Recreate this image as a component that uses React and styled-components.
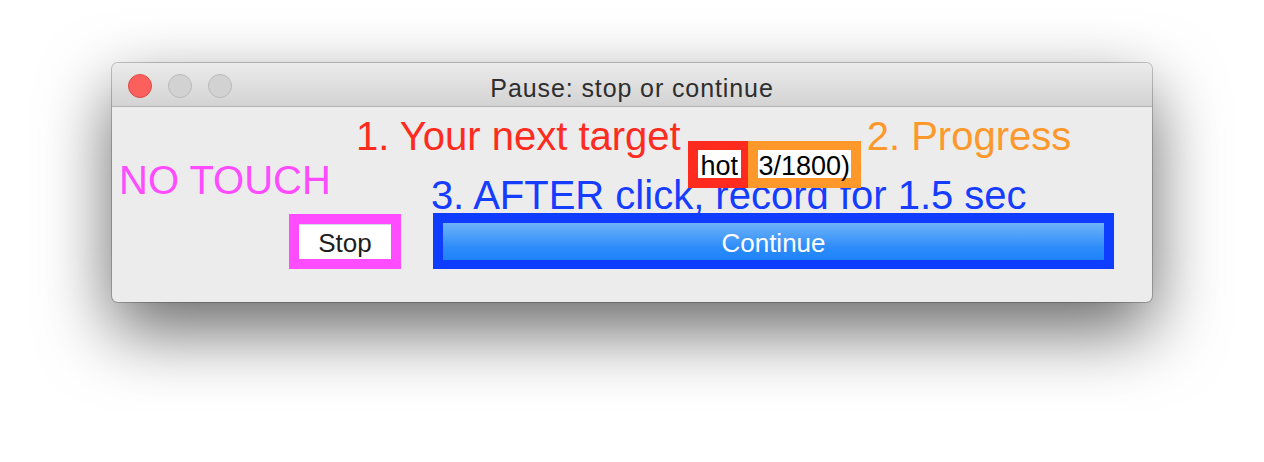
import React from "react";
import styled, { createGlobalStyle } from "styled-components";

const Global = createGlobalStyle`
  html, body { margin: 0; padding: 0; background: #ffffff; }
  body { font-family: "Liberation Sans", Arial, sans-serif; }
  #root { padding-top: 63px; padding-left: 112px; height: 462px; box-sizing: border-box; }
`;

const Window = styled.div`
  width: 1040px;
  height: 239px;
  box-sizing: border-box;
  border-radius: 6px;
  background: #ececec;
  box-shadow: 0 0 0 1px rgba(0, 0, 0, 0.22), 0 28px 70px rgba(0, 0, 0, 0.6);
  overflow: hidden;
  display: flex;
  flex-direction: column;
`;

const TitleBar = styled.div`
  height: 44px;
  box-sizing: border-box;
  border-bottom: 1px solid #b4b4b4;
  background: linear-gradient(#ebebeb, #d3d3d3);
  display: grid;
  grid-template-columns: 1fr auto 1fr;
  align-items: start;
`;

const Lights = styled.div`
  display: flex;
  gap: 16px;
  padding: 11px 0 0 16px;
`;

const Light = styled.span`
  width: 24px;
  height: 24px;
  box-sizing: border-box;
  border-radius: 50%;
  background: ${(p) => (p.$close ? "#fc605c" : "#d2d2d2")};
  border: 1px solid ${(p) => (p.$close ? "#de4a44" : "#bababa")};
`;

const Title = styled.div`
  margin-top: 12.5px;
  font-size: 25px;
  line-height: 25px;
  letter-spacing: 0.9px;
  color: #2e2e2e;
  white-space: nowrap;
`;

const Content = styled.div`
  flex: 1;
  display: flex;
  flex-direction: column;
  padding-top: 9px;
`;

const Row = styled.div`
  display: flex;
  align-items: flex-start;
  height: ${(p) => p.$h}px;
  margin-top: ${(p) => p.$mt || 0}px;
`;

const Caption = styled.div`
  font-size: 40px;
  line-height: 40px;
  white-space: nowrap;
  color: ${(p) => p.$color};
  margin-left: ${(p) => p.$ml || 0}px;
  margin-top: ${(p) => p.$mt || 0}px;
`;

const Tags = styled.div`
  display: flex;
  margin-left: 7px;
  margin-top: 25px;
  position: relative;
  z-index: 1;
`;

const Tag = styled.div`
  background: ${(p) => p.$color};
  padding: 9px ${(p) => p.$pr}px 10px 10px;
`;

const TagLabel = styled.div`
  width: ${(p) => p.$w}px;
  box-sizing: border-box;
  padding-top: 2px;
  background: #ffffff;
  color: #000000;
  font-size: 27px;
  line-height: 28px;
  height: 28px;
  text-align: center;
  white-space: nowrap;
`;

const Frame = styled.div`
  background: ${(p) => p.$color};
  padding: 10px 10px ${(p) => p.$pb || 10}px;
  margin-left: ${(p) => p.$ml || 0}px;
  margin-top: ${(p) => p.$mt || 0}px;
`;

const StopButton = styled.div`
  width: 92px;
  height: 35px;
  box-sizing: border-box;
  padding-top: 3px;
  background: #ffffff;
  border-top: 1px solid #d4dbe6;
  display: flex;
  align-items: center;
  justify-content: center;
  font-size: 26px;
  color: #1d1d1d;
`;

const ContinueButton = styled.div`
  width: 661px;
  height: 37px;
  box-sizing: border-box;
  padding-top: 4px;
  background: linear-gradient(#6db3f8, #2a8af9 70%, #1f84fa);
  display: flex;
  align-items: center;
  justify-content: center;
  font-size: 26px;
  color: #ffffff;
`;

export default function App() {
  return (
    <>
      <Global />
      <Window>
        <TitleBar>
          <Lights>
            <Light $close />
            <Light />
            <Light />
          </Lights>
          <Title>Pause: stop or continue</Title>
          <div />
        </TitleBar>
        <Content>
          <Row $h={40}>
            <Caption $color="#ff2b1f" $ml={244}>1. Your next target</Caption>
            <Tags>
              <Tag $color="#ff2b1f" $pr={7}>
                <TagLabel $w={43}>hot</TagLabel>
              </Tag>
              <Tag $color="#ff982b" $pr={10}>
                <TagLabel $w={93}>3/1800)</TagLabel>
              </Tag>
            </Tags>
            <Caption $color="#ff982b" $ml={6}>2. Progress</Caption>
          </Row>
          <Row $h={53} $mt={4}>
            <Caption $color="#ff4cff" $ml={7}>NO TOUCH</Caption>
            <Caption $color="#163dff" $ml={100} $mt={15}>3. AFTER click, record for 1.5 sec</Caption>
          </Row>
          <Row $h={56}>
            <Frame $color="#ff4cff" $ml={177} $mt={1}>
              <StopButton>Stop</StopButton>
            </Frame>
            <Frame $color="#0f3dff" $ml={32} $pb={9}>
              <ContinueButton>Continue</ContinueButton>
            </Frame>
          </Row>
        </Content>
      </Window>
    </>
  );
}
